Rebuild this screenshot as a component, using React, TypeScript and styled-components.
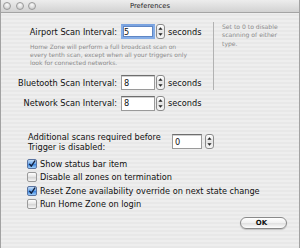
import React from "react";
import styled, { createGlobalStyle } from "styled-components";

const GlobalStyle = createGlobalStyle`
  html, body {
    margin: 0;
    padding: 0;
  }
  body {
    width: 300px;
    height: 248px;
    overflow: hidden;
    font-family: "DejaVu Sans", Verdana, sans-serif;
    color: #111;
  }
`;

interface IRow {
    label: string
    value: string
    focused?: boolean
}

interface ICheck {
    label: string
    checked: boolean
}

const checks: Array<ICheck> = [
    {label: "Show status bar item", checked: true},
    {label: "Disable all zones on termination", checked: false},
    {label: "Reset Zone availability override on next state change", checked: true},
    {label: "Run Home Zone on login", checked: false},
];

const StepperIcon: React.FC = () => (
    <svg width="7" height="13" viewBox="0 0 7 13">
        <path d="M3.5 2.2 L5.6 4.8 L1.4 4.8 Z" fill="#222" />
        <path d="M3.5 10.8 L5.6 8.2 L1.4 8.2 Z" fill="#222" />
    </svg>
);

const CheckIcon: React.FC = () => (
    <svg width="10" height="10" viewBox="0 0 10 10">
        <path d="M2 5.2 L4.2 7.8 L8.6 1.2" stroke="#13213d" strokeWidth="1.7" fill="none" strokeLinecap="round" strokeLinejoin="round" />
    </svg>
);

const IntervalRow: React.FC<IRow> = (props) => {
    return (
        <Row>
            <Label>{props.label}</Label>
            <NumberField focused={props.focused}>{props.value}</NumberField>
            <Stepper><StepperIcon /></Stepper>
            <Unit>seconds</Unit>
        </Row>
    );
}

const App: React.FC = () => {
    return (
        <Window>
            <GlobalStyle />
            <TitleBar>
                <Lights>
                    <Light />
                    <Light />
                    <Light />
                </Lights>
                <Title>Preferences</Title>
                <div />
            </TitleBar>

            <Content>
                <TopSection>
                    <FormColumn>
                        <IntervalRow label="Airport Scan Interval:" value="5" focused />
                        <HelpText>
                            Home Zone will perform a full broadcast scan on<br />
                            every tenth scan, except when all your triggers only<br />
                            look for connected networks.
                        </HelpText>
                        <Spacer size={8} />
                        <IntervalRow label="Bluetooth Scan Interval:" value="8" />
                    </FormColumn>
                    <Note>
                        Set to 0 to disable<br />
                        scanning of either<br />
                        type.
                    </Note>
                </TopSection>

                <Spacer size={5.5} />
                <IntervalRow label="Network Scan Interval:" value="8" />

                <AdditionalRow>
                    <AdditionalLabel>
                        Additional scans required before<br />
                        Trigger is disabled:
                    </AdditionalLabel>
                    <NumberField narrow>0</NumberField>
                    <Stepper spaced><StepperIcon /></Stepper>
                </AdditionalRow>

                <CheckList>
                    {checks.map(item => (
                        <CheckRow key={item.label}>
                            <CheckBox checked={item.checked}>
                                {item.checked && <CheckIcon />}
                            </CheckBox>
                            {item.label}
                        </CheckRow>
                    ))}
                </CheckList>

                <Footer>
                    <OkButton>OK</OkButton>
                </Footer>
            </Content>
        </Window>
    );
}

const Window = styled.div`
  width: 300px;
  height: 248px;
  box-sizing: border-box;
  display: flex;
  flex-direction: column;
  border-left: 1px solid #a2a2a2;
  border-right: 1px solid #a2a2a2;
  background: repeating-linear-gradient(to bottom, #eeeeee 0, #eeeeee 2px, #e8e8e8 2px, #e8e8e8 4px);
`

const TitleBar = styled.div`
  height: 13px;
  box-sizing: border-box;
  display: grid;
  grid-template-columns: 1fr auto 1fr;
  align-items: center;
  background: linear-gradient(to bottom, #ededed, #d2d2d2);
  border-bottom: 1px solid #a4a4a4;
`

const Lights = styled.div`
  display: flex;
  gap: 4.5px;
  padding-left: 2px;
`

const Light = styled.div`
  width: 8px;
  height: 8px;
  box-sizing: border-box;
  border-radius: 50%;
  border: 1px solid #9a9a9a;
  background: radial-gradient(circle at 50% 30%, #fafafa 0, #dcdcdc 55%, #bdbdbd 100%);
`

const Title = styled.div`
  font-size: 6.8px;
  color: #222;
  white-space: nowrap;
`

const Content = styled.div`
  flex: 1;
  display: flex;
  flex-direction: column;
  padding-top: 9px;
`

const TopSection = styled.div`
  display: flex;
  height: 68px;
`

const FormColumn = styled.div`
  width: 212px;
  padding-top: 2px;
`

const Note = styled.div`
  border-left: 1px solid #b2b2b2;
  padding: 1px 0 0 8px;
  font-size: 6.1px;
  line-height: 8.3px;
  color: #8c8c8c;
  white-space: nowrap;
`

const Spacer = styled.div<{size: number}>`
  height: ${props => props.size}px;
`

const Row = styled.div`
  display: flex;
  align-items: center;
  height: 15px;
`

const Label = styled.div`
  width: 116px;
  margin-right: 4px;
  text-align: right;
  font-size: 8.2px;
  white-space: nowrap;
`

const NumberField = styled.div<{focused?: boolean, narrow?: boolean}>`
  width: ${props => props.narrow ? 30 : 34}px;
  height: 15px;
  box-sizing: border-box;
  padding-left: ${props => props.focused ? 1 : 2}px;
  display: flex;
  align-items: center;
  font-size: 8.2px;
  background: #fff;
  border: ${props => props.focused ? "2px solid #85ade6" : "1px solid #9a9a9a"};
  border-top-color: ${props => props.focused ? "#7aa3e0" : "#6e6e6e"};
  box-shadow: ${props => props.focused ? "inset 0 0 0 1px #5f86c4" : "inset 0 1px 0 #d0d0d0"};
`

const Stepper = styled.div<{spaced?: boolean}>`
  width: 9px;
  height: 15px;
  box-sizing: border-box;
  margin-left: ${props => props.spaced ? 3 : 1}px;
  display: flex;
  align-items: center;
  justify-content: center;
  border: 1px solid #8c8c8c;
  border-radius: 3px;
  background: linear-gradient(to bottom, #ffffff, #e4e4e4 50%, #f6f6f6);
`

const Unit = styled.div`
  margin-left: 3px;
  font-size: 8.2px;
`

const HelpText = styled.div`
  margin-top: 3.5px;
  padding-left: 29px;
  font-size: 6px;
  line-height: 8.3px;
  color: #8c8c8c;
  white-space: nowrap;
`

const AdditionalRow = styled.div`
  display: flex;
  align-items: center;
  margin-top: 21px;
  padding-left: 27px;
  height: 20px;
`

const AdditionalLabel = styled.div`
  width: 144px;
  font-size: 8.2px;
  line-height: 10px;
  white-space: nowrap;
`

const CheckList = styled.div`
  display: flex;
  flex-direction: column;
  margin-top: 6px;
  padding-left: 26px;
`

const CheckRow = styled.div`
  display: flex;
  align-items: center;
  height: 13.3px;
  font-size: 8.2px;
  white-space: nowrap;
`

const CheckBox = styled.div<{checked: boolean}>`
  width: 10px;
  height: 10px;
  box-sizing: border-box;
  margin-right: 3px;
  display: flex;
  align-items: center;
  justify-content: center;
  border-radius: 2px;
  border: 1px solid ${props => props.checked ? "#5a73a0" : "#9a9a9a"};
  background: ${props => props.checked
    ? "linear-gradient(to bottom, #c4ddf8, #6aa6ea 50%, #3f86e0 55%, #9fd0fb)"
    : "linear-gradient(to bottom, #ffffff, #e2e2e2 50%, #d6d6d6 55%, #f4f4f4)"};
`

const Footer = styled.div`
  display: flex;
  justify-content: flex-end;
  margin-top: 6.5px;
  padding-right: 12px;
`

const OkButton = styled.button`
  width: 47px;
  height: 12px;
  box-sizing: border-box;
  padding: 0 4px 0 0;
  border: 1px solid #8a8a8a;
  border-radius: 6px;
  background: linear-gradient(to bottom, #ffffff, #f0f0f0 50%, #e2e2e2 55%, #fdfdfd);
  box-shadow: 0 1px 1px rgba(0, 0, 0, 0.18);
  font-family: "DejaVu Sans", Verdana, sans-serif;
  font-size: 7px;
  font-weight: bold;
  color: #111;
  line-height: 10px;
`

export default App;
